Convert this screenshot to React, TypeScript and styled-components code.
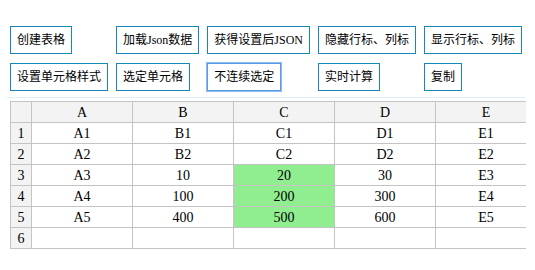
import React from 'react'
import styled, { createGlobalStyle } from 'styled-components'

const GlobalStyle = createGlobalStyle`
    html, body {
        margin: 0;
        padding: 0;
        background: #fff;
    }
`

const buttons: { label: string; focused?: boolean }[][] = [
    [
        { label: '创建表格' },
        { label: '加载Json数据' },
        { label: '获得设置后JSON' },
        { label: '隐藏行标、列标' },
        { label: '显示行标、列标' },
    ],
    [
        { label: '设置单元格样式' },
        { label: '选定单元格' },
        { label: '不连续选定', focused: true },
        { label: '实时计算' },
        { label: '复制' },
    ],
]

const columns = ['A', 'B', 'C', 'D', 'E']

const rows: string[][] = [
    ['A1', 'B1', 'C1', 'D1', 'E1'],
    ['A2', 'B2', 'C2', 'D2', 'E2'],
    ['A3', '10', '20', '30', 'E3'],
    ['A4', '100', '200', '300', 'E4'],
    ['A5', '400', '500', '600', 'E5'],
    ['', '', '', '', ''],
]

// cells picked by the "不连续选定" demo
const selected = new Set(['2-2', '3-2', '4-2'])

const App: React.FC = () => {
    return (
        <PageStyled>
            <GlobalStyle />
            <ToolbarStyled>
                {buttons.flat().map((b) => (
                    <ButtonStyled key={b.label} $focused={b.focused}>
                        {b.label}
                    </ButtonStyled>
                ))}
            </ToolbarStyled>
            <SheetStyled>
                <TableStyled>
                    <thead>
                        <tr>
                            <HeadCell $corner />
                            {columns.map((c) => (
                                <HeadCell key={c}>{c}</HeadCell>
                            ))}
                        </tr>
                    </thead>
                    <tbody>
                        {rows.map((row, r) => (
                            <tr key={r}>
                                <RowHead>{r + 1}</RowHead>
                                {row.map((v, c) => (
                                    <Cell key={c} $selected={selected.has(`${r}-${c}`)}>
                                        {v}
                                    </Cell>
                                ))}
                            </tr>
                        ))}
                    </tbody>
                </TableStyled>
            </SheetStyled>
        </PageStyled>
    )
}

const PageStyled = styled.div`
    padding: 26px 0 0 0;
    width: 535px;
`

const ToolbarStyled = styled.div`
    display: grid;
    grid-template-columns: repeat(5, max-content);
    column-gap: 8px;
    row-gap: 9px;
    justify-items: start;
    padding-left: 10px;
`

const ButtonStyled = styled.button<{ $focused?: boolean }>`
    box-sizing: border-box;
    height: 28px;
    margin: 0;
    padding: 0 6px;
    background: #fff;
    border: 1px solid ${(p) => (p.$focused ? '#5b9be6' : '#1688b8')};
    box-shadow: ${(p) => (p.$focused ? '0 0 0 1px #8cbcf0' : 'none')};
    border-radius: 0;
    font-family: "Liberation Serif", "Noto Sans CJK SC", serif;
    font-size: 12px;
    line-height: 16px;
    color: #000;
    white-space: nowrap;
    cursor: pointer;
`

const SheetStyled = styled.div`
    margin: 6px 9px 0 7px;
    padding: 3px 0 0 3px;
    border-top: 1px solid #dcf0f8;
    overflow: hidden;
`

const TableStyled = styled.table`
    border-collapse: collapse;
    table-layout: fixed;
    width: 526px;
    font-family: "Liberation Serif", "Times New Roman", serif;
    font-size: 14px;
    color: #000;

    td, th {
        box-sizing: border-box;
        height: 21px;
        padding: 0;
        border: 1px solid #c4c4c4;
        text-align: center;
        font-weight: normal;
        line-height: 19px;
    }
`

const HeadCell = styled.th<{ $corner?: boolean }>`
    width: ${(p) => (p.$corner ? '21px' : '101px')};
    background: #f3f3f3;
`

const RowHead = styled.td`
    background: #f3f3f3;
`

const Cell = styled.td<{ $selected?: boolean }>`
    background: ${(p) => (p.$selected ? '#90ee90' : '#fff')};
`

export default App
